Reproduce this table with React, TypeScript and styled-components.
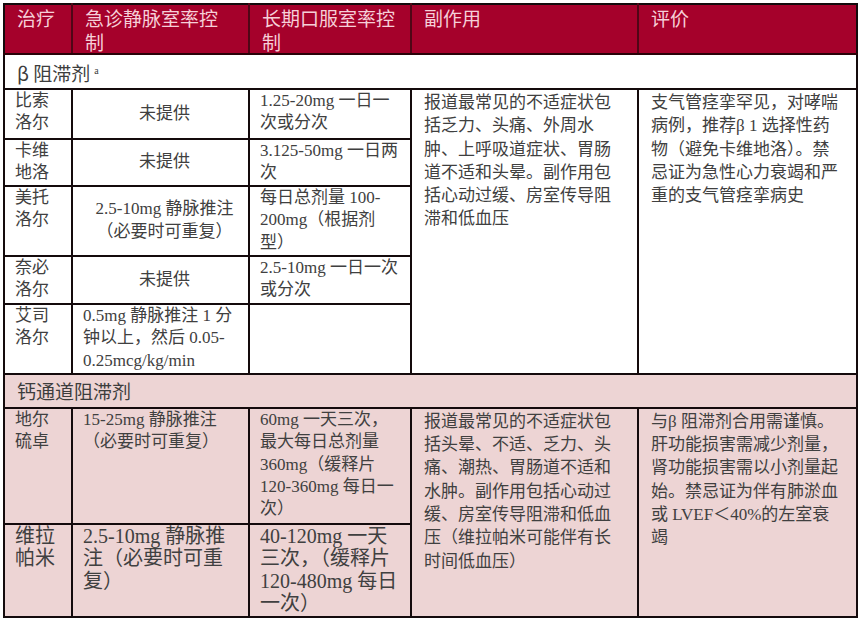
import styled, { createGlobalStyle } from 'styled-components';

const GlobalStyle = createGlobalStyle`
  html, body {
    margin: 0;
    padding: 0;
    background: #ffffff;
  }
`;

const Page = styled.div`
  padding: 3px 0 0 3px;
`;

const Table = styled.table`
  width: 853px;
  table-layout: fixed;
  border-collapse: collapse;
  border: 2px solid #140a0c;
  font-family: 'Liberation Serif', 'Noto Sans CJK SC', serif;
  color: #404040;
`;

const HeadRow = styled.tr`
  height: 48px;
  background: #a5012b;
`;

const HeadCell = styled.th`
  padding: 1px 10px 0 12px;
  vertical-align: top;
  text-align: left;
  font-family: 'Noto Sans CJK SC', sans-serif;
  font-weight: 400;
  font-size: 19px;
  color: #f6cfd8;
  border-left: 2px solid #4f0616;
  border-bottom: 2px solid #2a0208;

  &:first-child {
    border-left: none;
  }
`;

interface RowProps {
  $h: number;
  $tint?: boolean;
}
const Row = styled.tr<RowProps>`
  height: ${({ $h }) => $h}px;
  background: ${({ $tint }) => ($tint ? '#edd4d4' : '#ffffff')};
`;

const SectionCell = styled.td`
  padding: 0 12px;
  vertical-align: middle;
  font-family: 'Noto Sans CJK SC', sans-serif;
  font-size: 19px;
  line-height: 24px;
  color: #3d3d3d;
  border: 2px solid #140a0c;

  sup {
    font-family: 'Liberation Serif', serif;
    font-size: 10px;
    vertical-align: 7px;
    margin-left: 4px;
  }
`;

interface CellProps {
  $center?: boolean;
  $big?: boolean;
}
const Cell = styled.td<CellProps>`
  padding: 0 2px 0 10px;
  vertical-align: ${({ $center }) => ($center ? 'middle' : 'top')};
  text-align: ${({ $center }) => ($center ? 'center' : 'left')};
  font-size: ${({ $big }) => ($big ? 20 : 17)}px;
  border: 2px solid #140a0c;
`;

const WideCell = styled(Cell)`
  padding-left: 12px;
  padding-top: 1px;
`;

interface LineProps {
  $h: number;
}
const Line = styled.div<LineProps>`
  height: ${({ $h }) => $h}px;
  line-height: ${({ $h }) => $h}px;
  white-space: nowrap;
`;

const Lines = ({ text, h = 22.4 }: { text: string; h?: number }) => (
  <>
    {text.split('\n').map((t, i) => (
      <Line key={i} $h={h}>
        {t}
      </Line>
    ))}
  </>
);

interface DrugRow {
  name: string;
  iv: string;
  ivCenter?: boolean;
  oral: string;
  h: number;
  big?: boolean;
}

const betaRows: DrugRow[] = [
  { name: '比索\n洛尔', iv: '未提供', ivCenter: true, oral: '1.25-20mg 一日一\n次或分次', h: 50 },
  { name: '卡维\n地洛', iv: '未提供', ivCenter: true, oral: '3.125-50mg 一日两\n次', h: 46 },
  {
    name: '美托\n洛尔',
    iv: '2.5-10mg 静脉推注\n（必要时可重复）',
    ivCenter: true,
    oral: '每日总剂量 100-\n200mg（根据剂\n型）',
    h: 70,
  },
  { name: '奈必\n洛尔', iv: '未提供', ivCenter: true, oral: '2.5-10mg 一日一次\n或分次', h: 48 },
  {
    name: '艾司\n洛尔',
    iv: '0.5mg 静脉推注 1 分\n钟以上，然后 0.05-\n0.25mcg/kg/min',
    oral: '',
    h: 70,
  },
];

const calciumRows: DrugRow[] = [
  {
    name: '地尔\n硫卓',
    iv: '15-25mg 静脉推注\n（必要时可重复）',
    oral: '60mg 一天三次，\n最大每日总剂量\n360mg（缓释片\n120-360mg 每日一\n次）',
    h: 116,
  },
  {
    name: '维拉\n帕米',
    iv: '2.5-10mg 静脉推\n注（必要时可重\n复）',
    oral: '40-120mg 一天\n三次，（缓释片\n120-480mg 每日\n一次）',
    h: 93,
    big: true,
  },
];

const betaEffects =
  '报道最常见的不适症状包\n括乏力、头痛、外周水\n肿、上呼吸道症状、胃肠\n道不适和头晕。副作用包\n括心动过缓、房室传导阻\n滞和低血压';
const betaNotes =
  '支气管痉挛罕见，对哮喘\n病例，推荐β 1 选择性药\n物（避免卡维地洛）。禁\n忌证为急性心力衰竭和严\n重的支气管痉挛病史';
const calciumEffects =
  '报道最常见的不适症状包\n括头晕、不适、乏力、头\n痛、潮热、胃肠道不适和\n水肿。副作用包括心动过\n缓、房室传导阻滞和低血\n压（维拉帕米可能伴有长\n时间低血压）';
const calciumNotes =
  '与β 阻滞剂合用需谨慎。\n肝功能损害需减少剂量，\n肾功能损害需以小剂量起\n始。禁忌证为伴有肺淤血\n或 LVEF＜40%的左室衰\n竭';

const headers = ['治疗', '急诊静脉室率控\n制', '长期口服室率控\n制', '副作用', '评价'];

const App = () => {
  return (
    <Page>
      <GlobalStyle />
      <Table>
        <colgroup>
          <col style={{ width: 68 }} />
          <col style={{ width: 177 }} />
          <col style={{ width: 162 }} />
          <col style={{ width: 227 }} />
          <col style={{ width: 219 }} />
        </colgroup>
        <thead>
          <HeadRow>
            {headers.map((h) => (
              <HeadCell key={h}>
                <Lines text={h} h={23.5} />
              </HeadCell>
            ))}
          </HeadRow>
        </thead>
        <tbody>
          <Row $h={35}>
            <SectionCell colSpan={5}>
              β 阻滞剂<sup>a</sup>
            </SectionCell>
          </Row>
          {betaRows.map((r, i) => (
            <Row key={r.name} $h={r.h}>
              <Cell>
                <Lines text={r.name} />
              </Cell>
              <Cell $center={r.ivCenter}>
                <Lines text={r.iv} />
              </Cell>
              <Cell>
                <Lines text={r.oral} />
              </Cell>
              {i === 0 && (
                <>
                  <WideCell rowSpan={betaRows.length}>
                    <Lines text={betaEffects} h={23.3} />
                  </WideCell>
                  <WideCell rowSpan={betaRows.length}>
                    <Lines text={betaNotes} h={23.3} />
                  </WideCell>
                </>
              )}
            </Row>
          ))}
          <Row $h={34} $tint>
            <SectionCell colSpan={5}>钙通道阻滞剂</SectionCell>
          </Row>
          {calciumRows.map((r, i) => (
            <Row key={r.name} $h={r.h} $tint>
              <Cell $big={r.big}>
                <Lines text={r.name} />
              </Cell>
              <Cell $big={r.big}>
                <Lines text={r.iv} />
              </Cell>
              <Cell $big={r.big}>
                <Lines text={r.oral} />
              </Cell>
              {i === 0 && (
                <>
                  <WideCell rowSpan={calciumRows.length}>
                    <Lines text={calciumEffects} h={23.3} />
                  </WideCell>
                  <WideCell rowSpan={calciumRows.length}>
                    <Lines text={calciumNotes} h={23.3} />
                  </WideCell>
                </>
              )}
            </Row>
          ))}
        </tbody>
      </Table>
    </Page>
  );
};

export default App;
